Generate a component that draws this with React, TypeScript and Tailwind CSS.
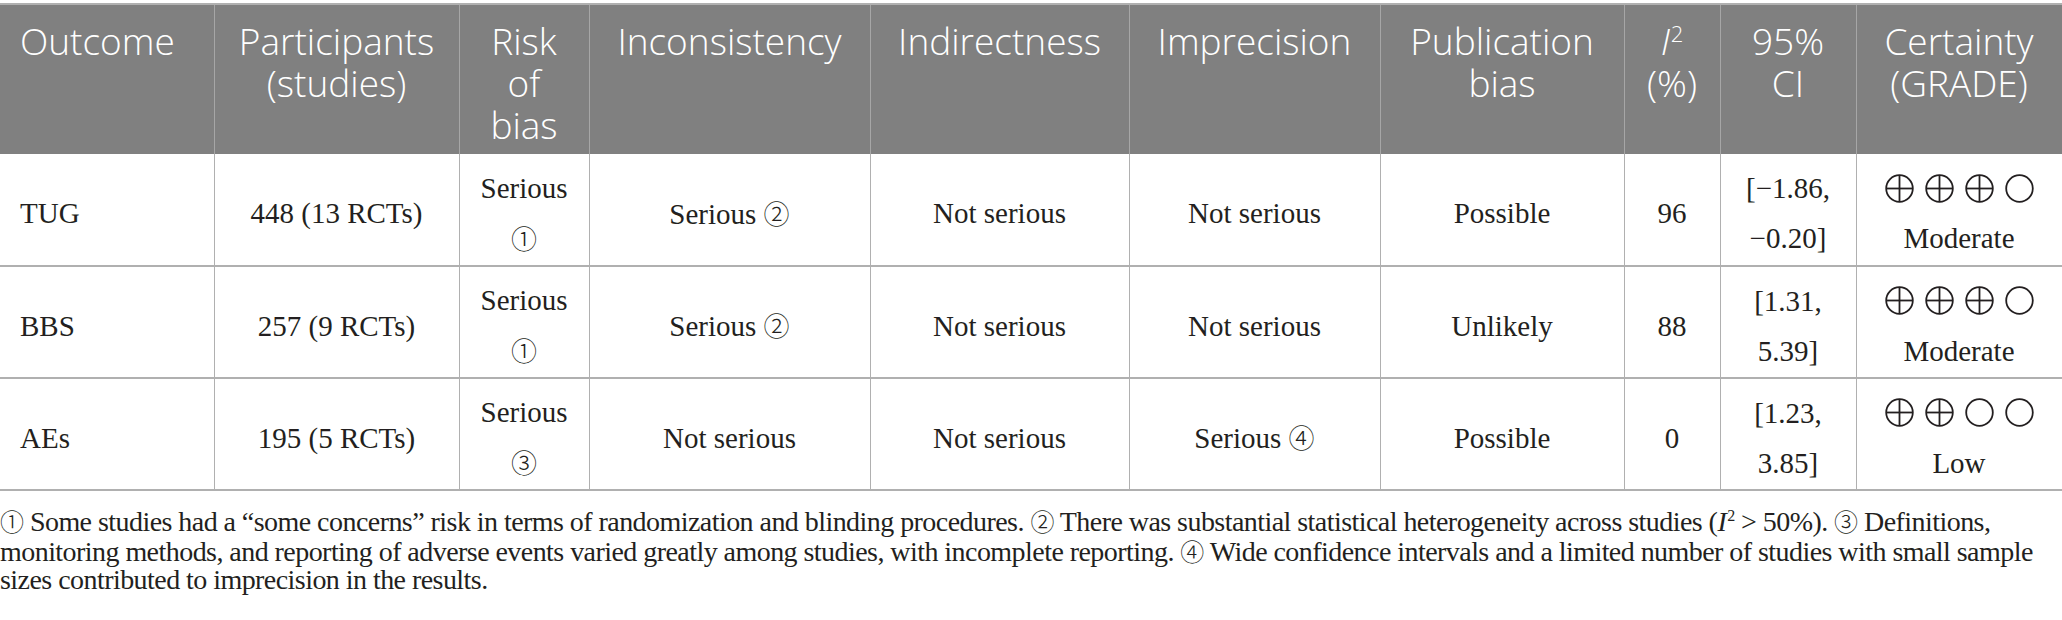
import React from "react";

const serif = "font-['Liberation_Serif','Noto_Sans_CJK_JP',serif]";

function Circ({ n, small }: { n: string; small?: boolean }) {
  return (
    <span
      className={`font-['Noto_Sans_CJK_JP','DejaVu_Sans',sans-serif] font-light ${
        small ? "text-[24px]" : "text-[26px]"
      }`}
    >
      {n}
    </span>
  );
}

function Plus() {
  return (
    <svg width="29" height="29" viewBox="0 0 29 29" aria-label="⊕" role="img">
      <circle cx="14.5" cy="14.5" r="13.3" fill="none" stroke="#231f20" strokeWidth="1.8" />
      <line x1="14.5" y1="1.2" x2="14.5" y2="27.8" stroke="#231f20" strokeWidth="1.8" />
      <line x1="1.2" y1="14.5" x2="27.8" y2="14.5" stroke="#231f20" strokeWidth="1.8" />
    </svg>
  );
}

function Empty() {
  return (
    <svg width="29" height="29" viewBox="0 0 29 29" aria-label="◯" role="img">
      <circle cx="14.5" cy="14.5" r="13.3" fill="none" stroke="#231f20" strokeWidth="1.8" />
    </svg>
  );
}

function Grade({ plus, label }: { plus: number; label: string }) {
  return (
    <div className="flex flex-col items-center">
      <div className="flex gap-[11px] h-[50px] items-center">
        {[0, 1, 2, 3].map((i) => (i < plus ? <Plus key={i} /> : <Empty key={i} />))}
      </div>
      <div className="leading-[50px]">{label}</div>
    </div>
  );
}

const th = "bg-[#808080] text-white align-top text-center pt-[15px] px-[4px] border-x border-[#a6a6a6] font-light";
const td = "border-x border-b-2 border-[#b0b0b0] text-center align-middle px-[6px] pt-[7px] pb-0 leading-[50px]";

type Row = {
  outcome: string;
  part: string;
  rob: string;
  robN: string;
  inc: React.ReactNode;
  ind: string;
  imp: React.ReactNode;
  pub: string;
  i2: string;
  ci: [string, string];
  plus: number;
  cert: string;
};

const rows: Row[] = [
  {
    outcome: "TUG",
    part: "448 (13 RCTs)",
    rob: "Serious",
    robN: "①",
    inc: (
      <>
        Serious <Circ n="②" />
      </>
    ),
    ind: "Not serious",
    imp: "Not serious",
    pub: "Possible",
    i2: "96",
    ci: ["[−1.86,", "−0.20]"],
    plus: 3,
    cert: "Moderate",
  },
  {
    outcome: "BBS",
    part: "257 (9 RCTs)",
    rob: "Serious",
    robN: "①",
    inc: (
      <>
        Serious <Circ n="②" />
      </>
    ),
    ind: "Not serious",
    imp: "Not serious",
    pub: "Unlikely",
    i2: "88",
    ci: ["[1.31,", "5.39]"],
    plus: 3,
    cert: "Moderate",
  },
  {
    outcome: "AEs",
    part: "195 (5 RCTs)",
    rob: "Serious",
    robN: "③",
    inc: "Not serious",
    ind: "Not serious",
    imp: (
      <>
        Serious <Circ n="④" />
      </>
    ),
    pub: "Possible",
    i2: "0",
    ci: ["[1.23,", "3.85]"],
    plus: 2,
    cert: "Low",
  },
];

export default function App() {
  return (
    <div className="w-[2062px] h-[620px] bg-white overflow-hidden pt-[3px]">
      <table className="table-fixed border-collapse w-[2062px] border-t-2 border-r border-[#b0b0b0]">
        <colgroup>
          <col className="w-[214px]" />
          <col className="w-[245px]" />
          <col className="w-[130px]" />
          <col className="w-[281px]" />
          <col className="w-[259px]" />
          <col className="w-[251px]" />
          <col className="w-[244px]" />
          <col className="w-[96px]" />
          <col className="w-[136px]" />
          <col className="w-[206px]" />
        </colgroup>
        <thead className="font-['Open_Sans',sans-serif] text-[37px] leading-[42px] font-light">
          <tr className="h-[150px]">
            <th className={`${th} text-left pl-[20px] border-l-0`}>Outcome</th>
            <th className={th}>
              Participants
              <br />
              (studies)
            </th>
            <th className={th}>
              Risk
              <br />
              of
              <br />
              bias
            </th>
            <th className={th}>Inconsistency</th>
            <th className={th}>Indirectness</th>
            <th className={th}>Imprecision</th>
            <th className={th}>
              Publication
              <br />
              bias
            </th>
            <th className={th}>
              <i>I</i>
              <sup className="text-[22px] leading-none align-[1px] relative top-[-12px] ml-[1px]">2</sup>
              <br />
              (%)
            </th>
            <th className={th}>
              95%
              <br />
              CI
            </th>
            <th className={th}>
              Certainty
              <br />
              (GRADE)
            </th>
          </tr>
        </thead>
        <tbody className={`${serif} text-[29px] text-[#231f20]`}>
          {rows.map((r) => (
            <tr key={r.outcome} className="h-[112px]">
              <td className={`${td} text-left pl-[20px] border-l-0`}>{r.outcome}</td>
              <td className={td}>{r.part}</td>
              <td className={td}>
                {r.rob}
                <br />
                <Circ n={r.robN} />
              </td>
              <td className={td}>{r.inc}</td>
              <td className={td}>{r.ind}</td>
              <td className={td}>{r.imp}</td>
              <td className={td}>{r.pub}</td>
              <td className={td}>{r.i2}</td>
              <td className={td}>
                {r.ci[0]}
                <br />
                {r.ci[1]}
              </td>
              <td className={td}>
                <Grade plus={r.plus} label={r.cert} />
              </td>
            </tr>
          ))}
        </tbody>
      </table>
      <p
        className={`${serif} text-[28px] leading-[28.5px] tracking-[-0.55px] text-[#231f20] mt-[16px] whitespace-nowrap`}
      >
        <Circ n="①" small /> Some studies had a “some concerns” risk in terms of randomization and blinding procedures.{" "}
        <Circ n="②" small /> There was substantial statistical heterogeneity across studies (<i>I</i>
        <sup className="text-[16px] leading-none align-[1px] relative top-[-9px] ml-[1px]">2</sup> &gt; 50%).{" "}
        <Circ n="③" small /> Definitions,
        <br />
        monitoring methods, and reporting of adverse events varied greatly among studies, with incomplete reporting.{" "}
        <Circ n="④" small /> Wide confidence intervals and a limited number of studies with small sample
        <br />
        sizes contributed to imprecision in the results.
      </p>
    </div>
  );
}
